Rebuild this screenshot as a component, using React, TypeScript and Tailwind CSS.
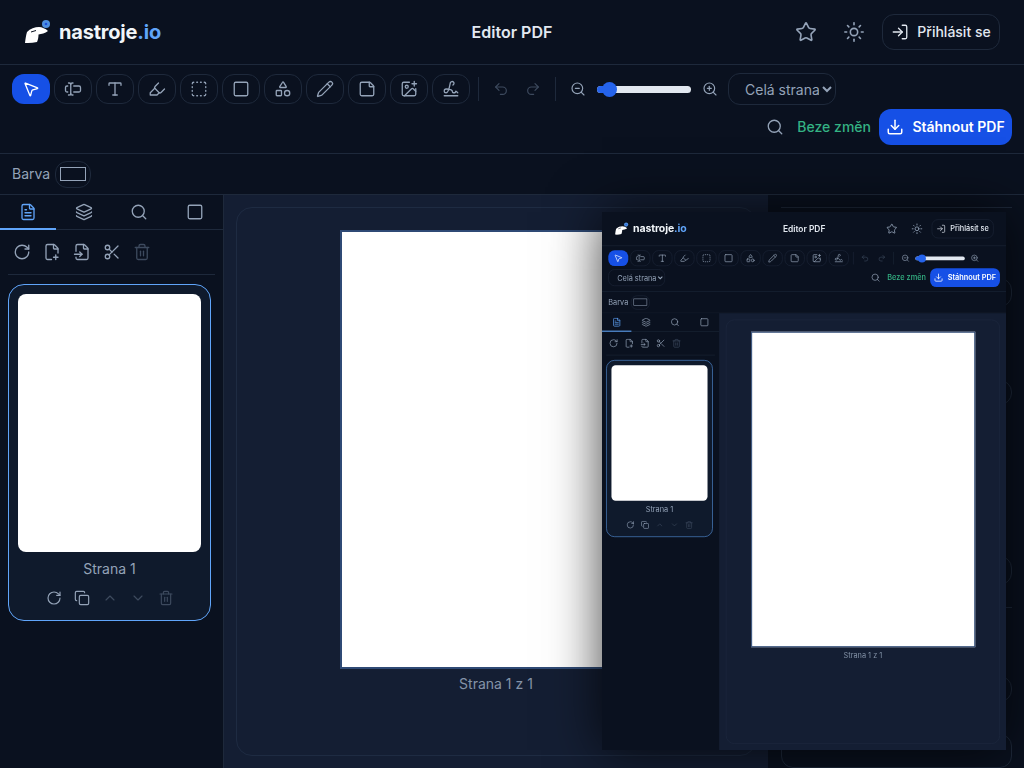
import React from "react";
import {
  ChevronDown,
  ChevronUp,
  Copy,
  Download,
  FileInput,
  FilePlus2,
  FileText,
  Highlighter,
  ImagePlus,
  Layers,
  LogIn,
  MousePointer2,
  Pencil,
  Redo2,
  RotateCw,
  Scissors,
  Search,
  Shapes,
  Signature,
  Square,
  SquareDashed,
  StickyNote,
  Sun,
  Star,
  TextCursorInput,
  Trash2,
  Type,
  Undo2,
  ZoomIn,
  ZoomOut,
} from "lucide-react";

const tools = [
  MousePointer2,
  TextCursorInput,
  Type,
  Highlighter,
  SquareDashed,
  Square,
  Shapes,
  Pencil,
  StickyNote,
  ImagePlus,
  Signature,
];

const Logo: React.FC = () => (
  <svg width="28" height="26" viewBox="0 0 28 26" className="shrink-0">
    <path
      d="M1 24 C1.5 20 2 16 3 13 C6 9.500 11 8 15 8 C18 8.200 21.500 9.500 24 12 C21 14.500 17.500 15 14.500 15.500 C14.500 18 14 21 13 23 C9 24 5 24.300 1 24 Z"
      fill="#ffffff"
    />
    <path d="M7 13 L12 11.500" stroke="#0a111f" strokeWidth="1" fill="none" />
    <circle cx="22" cy="5" r="4" fill="#4d8fe0" />
    <circle cx="22" cy="5" r="1.300" fill="#1d4ed8" />
  </svg>
);

const Toolbar: React.FC = () => (
  <div className="flex flex-wrap items-center gap-x-1 gap-y-1 border-b border-[#1e293b] px-3 py-2">
    <div className="flex items-center gap-2">
      <div className="flex items-center gap-1">
        {tools.map((Icon, i) => (
          <button
            key={i}
            className={
              i === 0
                ? "flex h-[30px] w-[38px] items-center justify-center rounded-xl bg-[#1650e6] text-white"
                : "flex h-[30px] w-[38px] items-center justify-center rounded-xl border border-[#1e293b] text-[#94a3b8]"
            }
          >
            <Icon size={18} strokeWidth={1.75} />
          </button>
        ))}
      </div>
      <div className="h-6 w-px bg-[#1e293b]" />
      <div className="flex items-center gap-1 text-[#3d4a5e]">
        <button className="flex h-7 w-7 items-center justify-center">
          <Undo2 size={16} strokeWidth={1.75} />
        </button>
        <button className="flex h-7 w-7 items-center justify-center">
          <Redo2 size={16} strokeWidth={1.75} />
        </button>
      </div>
      <div className="h-6 w-px bg-[#1e293b]" />
      <div className="flex items-center gap-[5px] text-[#94a3b8]">
        <button className="flex h-7 w-7 items-center justify-center">
          <ZoomOut size={16} strokeWidth={1.75} />
        </button>
        <div className="relative h-[7px] w-[94px] rounded-full bg-[#e2e8f0]">
          <div className="h-full w-3 rounded-l-full bg-[#2563eb]" />
          <div className="absolute left-[5px] top-[-4px] h-[15px] w-[15px] rounded-full bg-[#2563eb]" />
        </div>
        <button className="flex h-7 w-7 items-center justify-center">
          <ZoomIn size={16} strokeWidth={1.75} />
        </button>
      </div>
    </div>
    <select className="h-8 w-[108px] rounded-xl border border-[#1e293b] bg-transparent pl-3 text-sm text-[#94a3b8] [color-scheme:dark]">
      <option>Celá strana</option>
    </select>
    <div className="ml-auto flex items-center gap-2">
      <div className="flex items-center gap-[13px]">
        <Search size={18} strokeWidth={1.75} className="text-[#94a3b8]" />
        <span className="text-sm font-medium text-[#34b384]">Beze změn</span>
      </div>
      <button className="flex h-9 w-[133px] items-center justify-center gap-2 rounded-xl bg-[#1650e6] text-sm font-semibold text-white">
        <Download size={18} strokeWidth={2} />
        Stáhnout PDF
      </button>
    </div>
  </div>
);

const Sidebar: React.FC = () => (
  <aside className="flex w-[224px] shrink-0 flex-col border-r border-[#1e293b] bg-[#0a111f]">
    <div className="flex h-[35px] border-b border-[#1e293b]">
      <button className="flex h-[35px] w-14 items-center justify-center border-b-2 border-[#60a5fa] text-[#60a5fa]">
        <FileText size={18} strokeWidth={1.75} />
      </button>
      {[Layers, Search, Square].map((Icon, i) => (
        <button key={i} className="flex h-[34px] w-14 items-center justify-center text-[#94a3b8]">
          <Icon size={18} strokeWidth={1.75} />
        </button>
      ))}
    </div>
    <div className="mx-2 flex h-[45px] items-center border-b border-[#1e293b] pl-0 text-[#94a3b8]">
      <button className="-ml-px flex h-[30px] w-[30px] items-center justify-center">
        <RotateCw size={18} strokeWidth={1.75} />
      </button>
      <button className="flex h-[30px] w-[30px] items-center justify-center">
        <FilePlus2 size={18} strokeWidth={1.75} />
      </button>
      <button className="flex h-[30px] w-[30px] items-center justify-center">
        <FileInput size={18} strokeWidth={1.75} />
      </button>
      <button className="flex h-[30px] w-[30px] items-center justify-center">
        <Scissors size={18} strokeWidth={1.75} />
      </button>
      <button className="flex h-[30px] w-[30px] items-center justify-center text-[#3d4a5e]">
        <Trash2 size={18} strokeWidth={1.75} />
      </button>
    </div>
    <div className="ml-2 mt-[9px] flex w-[203px] flex-col items-center rounded-2xl border border-[#60a5fa] bg-[#0f1a2c] p-[9px] pb-2">
      <div className="h-[258px] w-[183px] rounded-lg bg-white" />
      <span className="mt-[7px] text-sm text-[#94a3b8]">Strana 1</span>
      <div className="mt-[5px] flex text-[#94a3b8]">
        <button className="flex h-7 w-7 items-center justify-center">
          <RotateCw size={16} strokeWidth={1.75} />
        </button>
        <button className="flex h-7 w-7 items-center justify-center">
          <Copy size={16} strokeWidth={1.75} />
        </button>
        <button className="flex h-7 w-7 items-center justify-center text-[#3d4a5e]">
          <ChevronUp size={16} strokeWidth={1.75} />
        </button>
        <button className="flex h-7 w-7 items-center justify-center text-[#3d4a5e]">
          <ChevronDown size={16} strokeWidth={1.75} />
        </button>
        <button className="flex h-7 w-7 items-center justify-center text-[#3d4a5e]">
          <Trash2 size={16} strokeWidth={1.75} />
        </button>
      </div>
    </div>
  </aside>
);

const RightPanel: React.FC = () => (
  <aside className="flex w-[256px] shrink-0 flex-col bg-[#0a111f] pl-[13px] pr-3">
    <div className="mt-3 border-t border-[#1e293b]" />
    <div className="mt-[70px] h-[34px] rounded-xl border border-[#1e293b]" />
    <div className="mt-[34px] h-[34px] rounded-xl border border-transparent" />
    <div className="mt-[10px] h-[30px] rounded-xl border border-[#1e293b]" />
    <div className="mt-[151px] h-[34px] rounded-xl border border-[#1e293b]" />
    <div className="mt-[22px] border-t border-[#1e293b]" />
    <div className="mt-[68px] h-[30px] rounded-xl border border-[#1e293b]" />
    <span className="mt-[9px] text-sm leading-5 text-[#94a3b8]">Název</span>
    <div className="mt-[3px] h-10 rounded-xl border border-[#1e293b]" />
  </aside>
);

const Editor: React.FC<{ mini?: boolean }> = ({ mini }) => (
  <div
    className={
      mini
        ? "flex h-[1025px] w-[770px] flex-col bg-[#0a111f] [font-family:Inter,sans-serif]"
        : "flex h-screen w-full flex-col overflow-hidden bg-[#0a111f] [font-family:Inter,sans-serif]"
    }
  >
    <header className="grid h-[65px] shrink-0 grid-cols-[1fr_auto_1fr] items-center border-b border-[#1e293b] px-6">
      <div className="flex items-center gap-[7px]">
        <Logo />
        <span className="text-xl font-bold tracking-[-0.2px] text-[#f1f5f9]">
          nastroje<span className="text-[#60a5fa]">.io</span>
        </span>
      </div>
      <h1 className="text-base font-semibold text-[#e2e8f0]">Editor PDF</h1>
      <div className="flex items-center justify-end gap-2 text-[#94a3b8]">
        <button className="flex h-10 w-10 items-center justify-center">
          <Star size={22} strokeWidth={1.75} />
        </button>
        <button className="flex h-10 w-10 items-center justify-center">
          <Sun size={22} strokeWidth={1.75} />
        </button>
        <button className="flex h-9 w-[118px] items-center justify-center gap-2 rounded-xl border border-[#1e293b] text-sm font-medium text-[#e2e8f0]">
          <LogIn size={18} strokeWidth={1.75} />
          Přihlásit se
        </button>
      </div>
    </header>
    <Toolbar />
    <div className="flex h-[41px] shrink-0 items-center gap-[5px] border-b border-[#1e293b] px-3">
      <span className="text-sm text-[#94a3b8]">Barva</span>
      <button className="flex h-[27px] w-9 items-center justify-center rounded-xl border border-[#1e293b]">
        <span className="h-[14px] w-[26px] border border-[#94a3b8]" />
      </button>
    </div>
    <div className="flex min-h-0 flex-1">
      <Sidebar />
      <main className="min-w-0 flex-1 bg-[#141e33] p-3">
        <div className="flex h-full flex-col items-center rounded-2xl border border-[#1e2b42] pt-[22px]">
          <div
            className={
              mini
                ? "h-[601px] w-[427px] border-2 border-[#2f4a75] bg-white"
                : "h-[439px] w-[312px] border-2 border-[#2f4a75] bg-white"
            }
          />
          <span className="mt-[5px] text-sm text-[#8493a8]">Strana 1 z 1</span>
        </div>
      </main>
      {!mini && <RightPanel />}
    </div>
  </div>
);

export default function App() {
  return (
    <div className="relative h-screen w-full overflow-hidden">
      <Editor />
      <div className="absolute left-[602px] top-[212px] h-[538px] w-[404px] shadow-[0_0_50px_rgba(0,0,0,0.75)]">
        <div className="h-full w-full overflow-hidden blur-[0.3px]">
          <div className="origin-top-left scale-[0.525]">
            <Editor mini />
          </div>
        </div>
      </div>
    </div>
  );
}
